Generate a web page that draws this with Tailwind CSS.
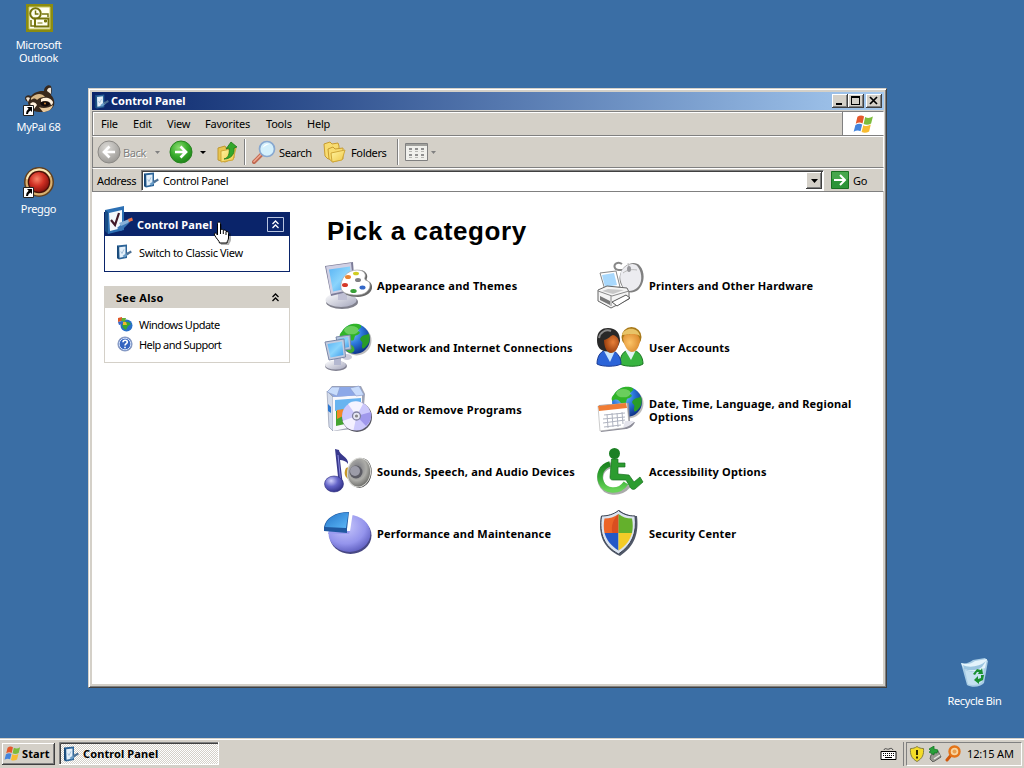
<!DOCTYPE html>
<html lang="en">
<head>
<meta charset="utf-8">
<title>Control Panel</title>
<script src="https://cdn.jsdelivr.net/npm/@tailwindcss/browser@4"></script>
</head>
<body class="relative h-[768px] w-[1024px] overflow-hidden bg-[#3a6ea5] font-['Noto_Sans',sans-serif] text-[11px] leading-[13px] tracking-[-0.35px] text-black">
<!-- shared gradients and symbols -->
<svg width="0" height="0" class="absolute">
  <defs>
    <radialGradient id="sea" cx=".35" cy=".3" r=".75"><stop offset="0" stop-color="#8fd0ff"/><stop offset=".5" stop-color="#2c78dc"/><stop offset="1" stop-color="#0c2f86"/></radialGradient>
    <linearGradient id="scr" x1="0" y1="0" x2="1" y2="1"><stop offset="0" stop-color="#5ab4f4"/><stop offset=".5" stop-color="#8ad4fc"/><stop offset="1" stop-color="#3c9cec"/></linearGradient>
    <linearGradient id="silver" x1="0" y1="0" x2="1" y2="1"><stop offset="0" stop-color="#fff"/><stop offset="1" stop-color="#a4a6bc"/></linearGradient>
    <radialGradient id="viol" cx=".4" cy=".3" r=".8"><stop offset="0" stop-color="#c8c8fc"/><stop offset=".6" stop-color="#9494ec"/><stop offset="1" stop-color="#5050b4"/></radialGradient>
    <linearGradient id="blue" x1="0" y1="0" x2="1" y2="1"><stop offset="0" stop-color="#2474c8"/><stop offset="1" stop-color="#5cb8f8"/></linearGradient>
    <radialGradient id="note" cx=".35" cy=".3" r=".8"><stop offset="0" stop-color="#d0d0fc"/><stop offset=".45" stop-color="#6464c8"/><stop offset="1" stop-color="#28287c"/></radialGradient>
    <radialGradient id="greenball" cx=".4" cy=".3" r=".8"><stop offset="0" stop-color="#8cdc70"/><stop offset=".5" stop-color="#38ac2c"/><stop offset="1" stop-color="#187814"/></radialGradient>
    <radialGradient id="grayball" cx=".4" cy=".3" r=".8"><stop offset="0" stop-color="#dcdad6"/><stop offset="1" stop-color="#94928e"/></radialGradient>
    <linearGradient id="folder" x1="0" y1="0" x2="1" y2="1"><stop offset="0" stop-color="#fff4a0"/><stop offset="1" stop-color="#f0c848"/></linearGradient>
    <linearGradient id="access" x1="0" y1="0" x2="0" y2="1"><stop offset="0" stop-color="#1c8420"/><stop offset=".5" stop-color="#34a834"/><stop offset="1" stop-color="#68d458"/></linearGradient>
    <radialGradient id="redball" cx=".4" cy=".35" r=".7"><stop offset="0" stop-color="#f88468"/><stop offset=".5" stop-color="#d03024"/><stop offset="1" stop-color="#80100c"/></radialGradient>
    <radialGradient id="faceD" cx=".6" cy=".4" r=".7"><stop offset="0" stop-color="#e88038"/><stop offset="1" stop-color="#8c3408"/></radialGradient>
    <radialGradient id="faceL" cx=".4" cy=".5" r=".7"><stop offset="0" stop-color="#fcc468"/><stop offset="1" stop-color="#d88428"/></radialGradient>
    <radialGradient id="cone" cx=".4" cy=".4" r=".65"><stop offset="0" stop-color="#74747c"/><stop offset=".6" stop-color="#acaca8"/><stop offset="1" stop-color="#686864"/></radialGradient>
    <symbol id="cp" viewBox="0 0 16 16">
      <path d="M1 1.500 11 .5v13.500L3 15.500 1 14z" fill="#2c6498"/><path d="M1 1.500 2.700 3v12.200L1 14z" fill="#184878"/>
      <path d="M3.200 3.300 9.500 2.400v10l-5.900 1.300z" fill="#e4f0fa"/><path d="M4.800 7.400 6 9.500l2-4.200" fill="none" stroke="#98b8d4" stroke-width=".8"/>
      <path d="m6.500 12 5-3.800 1.600 1.800-4.600 3.600z" fill="#689cc8"/><path d="m10 9.300 4.800-2.800 1 1.900-4.800 2.800z" fill="#4c7094"/>
    </symbol>
    <symbol id="globe" viewBox="0 0 32 32">
      <circle cx="17" cy="17" r="14.500" fill="#555" opacity=".4"/>
      <circle cx="15.500" cy="15.500" r="14.500" fill="url(#sea)"/>
      <path d="M3 8C7 1 16-1 21 2c2 3-2 3-3 6 4 0 2 4-2 4-2 2 0 5-4 5S9 13 5 13s-3 3-4 1 0-4 2-6z" fill="#30b428"/>
      <path d="M22 13c3-2 6-1 7-3 1 3 1 6 0 9-2 3-3 5-6 6-2-3 1-5-1-7s-2-3 0-5z" fill="#289c28"/>
      <path d="M10 21c3 0 5 2 5 5 0 2-2 3-4 3-3-1-5-3-6-5 1-2 3-3 5-3z" fill="#40ac30"/>
      <ellipse cx="12" cy="7" rx="7" ry="4" fill="#d8ffc0" opacity=".35"/>
    </symbol>
    <symbol id="flag" viewBox="0 0 19 17">
      <path d="M4 2.500c2-1.600 4-1.700 6-.4L8.600 8.400C6.700 7.200 4.700 7.400 2.500 8.800z" fill="#e4582c"/>
      <path d="M11 2.600c2 1.200 4.500 1.100 7-.5l-1.600 6.300c-2.200 1.500-4.600 1.600-6.800.5z" fill="#7cbc3c"/>
      <path d="M2.200 9.900C4.400 8.500 6.500 8.300 8.300 9.500L6.800 15.600C5 14.400 2.900 14.600.6 16z" fill="#4484dc"/>
      <path d="M9.300 10c2.200 1.200 4.400 1 6.800-.5l-1.500 6.200c-2.400 1.500-4.600 1.600-6.800.5z" fill="#f8bc30"/>
    </symbol>
    <symbol id="short" viewBox="0 0 11 11"><path d="M.5.5h10v10H.5z" fill="#fff" stroke="#222"/><path d="M4 2h5v5L7.500 5.500Q5 6.500 5 9H3q0-3.500 2.600-5.300z" fill="#000"/></symbol>
    <symbol id="chev" viewBox="0 0 9 9"><path d="m1.500 4 3-3 3 3M1.500 8l3-3 3 3" fill="none" stroke="currentColor" stroke-width="1.300"/></symbol>
    <pattern id="dither" width="2" height="2" patternUnits="userSpaceOnUse"><path d="M0 0h2v2H0z" fill="#fff"/><path d="M0 0h1v1H0zM1 1h1v1H1z" fill="#d4d0c8"/></pattern>
  </defs>
</svg>

<!-- desktop icons -->
<div class="absolute left-0 top-0 flex w-[77px] flex-col items-center text-center text-white">
  <svg class="mt-[3px] h-[32px] w-[32px]" viewBox="0 0 32 32"><path d="M3 1h27v28H3z" fill="#8c8c10"/><path d="M6 4h21v22H6z" fill="#fffff0" stroke="#c8c860"/><circle cx="12.500" cy="10.500" r="5.300" fill="#fffff0" stroke="#74740c" stroke-width="2"/><path d="M12.500 7.500v3.500h3" fill="none" stroke="#74740c" stroke-width="1.500"/><path d="M12 15.500h13.500v8H12z" fill="#fffff0" stroke="#74740c" stroke-width="2"/><path d="M14.500 20h5M21.500 17h2v2h-2z" stroke="#74740c" fill="#74740c"/><path d="M8 17v6h3M19 11h6v3" fill="none" stroke="#74740c" stroke-width="1.500"/></svg>
  <div class="mt-[3px]">Microsoft<br>Outlook</div>
</div>
<div class="absolute left-0 top-[84px] flex w-[77px] flex-col items-center text-center text-white">
  <div class="relative h-[32px] w-[32px]">
    <svg class="h-[32px] w-[32px]" viewBox="0 0 32 32"><path d="M2 14c0-2 3-4 6-2 5-5 9-5 13-5 0-4 4-7 7-5 1 3 1 6 0 9 4 4 4 10 2 12-3 5-10 5-14 5-6 0-11-5-11-10-2-1-3-2-3-4z" fill="#38281c"/><path d="M3 14c1-1 3-1 4 0l-2 4zM24 7c0-2 2-4 4-3v6z" fill="#f0e4d4"/><path d="M8 14c5-5 11-5 14-1-4 0-6 1-8 3-2-2-3-2-6 0z" fill="#d8b888"/><path d="M18 15c5-3 11 0 12 3 0 2-1 3-2 3-1-4-5-5-10-3zM7 20c2-3 6-2 7 1l-3 4z" fill="#fff0dc"/><path d="M16 23c4 2 10 1 14-2-1 5-6 7-10 7z" fill="#e8c89c"/><path d="M17 19c3-2 8-2 10 1-2 3-6 3-9 1z" fill="#100808"/><circle cx="22" cy="19.500" r="1" fill="#c88030"/></svg>
    <svg class="absolute bottom-0 left-0 h-[11px] w-[11px]"><use href="#short"/></svg>
  </div>
  <div class="mt-[4px]">MyPal 68</div>
</div>
<div class="absolute left-0 top-[166px] flex w-[77px] flex-col items-center text-center text-white">
  <div class="relative h-[32px] w-[32px]">
    <svg class="h-[32px] w-[32px]" viewBox="0 0 32 32"><circle cx="16" cy="16" r="15" fill="#604020"/><circle cx="16" cy="16" r="13.500" fill="#d8b070"/><path d="M4 13A12.500 12.500 0 0 1 27 10" fill="none" stroke="#f8e8b8" stroke-width="2"/><circle cx="16" cy="16" r="11.300" fill="#481008"/><circle cx="16" cy="16" r="10" fill="url(#redball)"/></svg>
    <svg class="absolute bottom-0 left-0 h-[11px] w-[11px]"><use href="#short"/></svg>
  </div>
  <div class="mt-[4px]">Preggo</div>
</div>
<div class="absolute left-[936px] top-[657px] flex w-[77px] flex-col items-center text-center text-white">
  <svg class="h-[32px] w-[32px]" viewBox="0 0 32 32"><path d="M2 6c4 1 8 0 12-3l12-2 3 3-4 22c-3 4-12 5-17 2z" fill="#a8cce4"/><path d="M2 6c6 2 10 1 14-2l12-2-2 9c-8 5-16 3-21 1z" fill="#e4f4fc"/><path d="M6 13c7 3 13 2 19-2l-2 14c-3 3-10 4-14 2z" fill="#c4e0f0"/><path d="M4 8c5 3 17 2 23-4l-4 6c-5 4-12 4-18 2z" fill="#7cb0d4" opacity=".7"/><path d="m14 17 4-5 4 1 1-2 1 6-5 0 1-2-2 0-2 3zM25 18l-1 5-4 2v2l-5-4 4-4 0 3 3-1 0-3z" fill="#189030"/></svg>
  <div class="mt-[5px] whitespace-nowrap">Recycle Bin</div>
</div>

<!-- explorer window -->
<main class="absolute left-[88px] top-[88px] flex h-[600px] w-[799px] flex-col border border-b-[#404040] border-l-[#d4d0c8] border-r-[#404040] border-t-[#d4d0c8] bg-[#d4d0c8] p-[2px] shadow-[inset_1px_1px_#fff,inset_-1px_-1px_#808080]">
  <header class="ml-px mt-px flex h-[18px] shrink-0 items-center bg-linear-to-r from-[#0a246a] to-[#a6caf0] pl-[2px] pr-[2px] font-bold tracking-[0.05px] text-white">
    <svg class="mr-[2px] h-[15px] w-[15px]"><use href="#cp"/></svg>
    <span class="-mt-[2px]">Control Panel</span>
    <div class="ml-auto flex">
      <button class="h-[14px] w-[16px] bg-[#d4d0c8] shadow-[inset_-1px_-1px_#404040,inset_1px_1px_#fff,inset_-2px_-2px_#808080]"><svg class="h-[14px] w-[16px]"><path d="M4 9h6v2H4z"/></svg></button>
      <button class="h-[14px] w-[16px] bg-[#d4d0c8] shadow-[inset_-1px_-1px_#404040,inset_1px_1px_#fff,inset_-2px_-2px_#808080]"><svg class="h-[14px] w-[16px]"><path d="M3 2h9v9H3zM4 4v6h7V4z" fill-rule="evenodd"/></svg></button>
      <button class="ml-[2px] h-[14px] w-[16px] bg-[#d4d0c8] shadow-[inset_-1px_-1px_#404040,inset_1px_1px_#fff,inset_-2px_-2px_#808080]"><svg class="h-[14px] w-[16px]"><path d="m4 3 7 7M11 3l-7 7" stroke="#000" stroke-width="1.700"/></svg></button>
    </div>
  </header>
  <nav class="ml-px mt-px flex h-[25px] shrink-0 items-center border border-b-[#808080] border-l-[#808080] border-r-white border-t-[#808080] pl-[8px] tracking-[-0.2px] shadow-[inset_1px_1px_#fff]">
    <span class="w-[32px]">File</span><span class="w-[34px]">Edit</span><span class="w-[38px]">View</span><span class="w-[61px]">Favorites</span><span class="w-[41px]">Tools</span><span>Help</span>
    <div class="ml-auto flex h-full w-[41px] items-center justify-center border-l border-[#808080] bg-white"><svg class="h-[19px] w-[21px]"><use href="#flag"/></svg></div>
  </nav>
  <section class="ml-px flex h-[32px] shrink-0 items-center border border-b-[#808080] border-l-[#808080] border-r-white border-t-white pl-[4px]">
    <svg class="h-[24px] w-[24px]" viewBox="0 0 24 24"><circle cx="12" cy="12" r="11" fill="url(#grayball)" stroke="#8c8a86"/><path d="M18 12H7m5.500-5.500L7 12l5.500 5.500" fill="none" stroke="#fff" stroke-width="2.700"/></svg>
    <span class="ml-[2px] w-[31px] text-[#808080] [text-shadow:1px_1px_#fff]">Back</span>
    <svg class="h-[5px] w-[7px]"><path d="M1 1h5L3.500 4z" fill="#808080"/></svg>
    <svg class="ml-[8px] h-[24px] w-[24px]" viewBox="0 0 24 24"><circle cx="12" cy="12" r="11" fill="url(#greenball)" stroke="#288420"/><path d="M6 12h11m-5.500-5.500L17 12l-5.500 5.500" fill="none" stroke="#fff" stroke-width="2.700"/></svg>
    <svg class="ml-[7px] h-[5px] w-[7px]"><path d="M0 1h6L3 4z"/></svg>
    <svg class="ml-[10px] h-[24px] w-[22px]" viewBox="0 0 22 24"><path d="M1 8l7-2 1 2 8-2v12L8 22 1 20z" fill="#e8c450" stroke="#c09830"/><path d="m4 11 15-3-3 12-12 2z" fill="url(#folder)" stroke="#d0a838"/><path d="M7 19c4-1 6-5 5-11l-3 1 5-7 6 5-3 1c1 6-3 11-10 11z" fill="#34a82c" stroke="#207818" stroke-width=".8"/></svg>
    <div class="ml-[5px] mr-[6px] h-[26px] w-[2px] border-l border-r border-l-[#808080] border-r-white"></div>
    <svg class="h-[25px] w-[24px]" viewBox="0 0 24 25"><path d="M2 22 10 14" stroke="#c06850" stroke-width="4" stroke-linecap="round"/><path d="M2 21.500 9 14.500" stroke="#f0a890" stroke-width="1.500" stroke-linecap="round"/><circle cx="15" cy="9" r="7.500" fill="#d4f0fc" stroke="#88a8d0" stroke-width="1.700"/><path d="M10.500 8c1-4 5-5 7-4-3 1-5 2-7 4z" fill="#fff"/></svg>
    <span class="ml-[3px] w-[44px]">Search</span>
    <svg class="h-[22px] w-[24px]" viewBox="0 0 24 22"><path d="M1 3l6-2 2 2 6-1 1 3v10L5 18 2 15z" fill="#f8dc70" stroke="#c89c30"/><path d="M5 8l5-2 2 2 8-1v11l-10 3-4-3z" fill="#f8dc70" stroke="#c89c30"/><path d="m8 12 14-3-3 10-10 2z" fill="url(#folder)" stroke="#d0a838"/></svg>
    <span class="ml-[4px] w-[35px]">Folders</span>
    <div class="ml-[11px] mr-[6px] h-[26px] w-[2px] border-l border-r border-l-[#808080] border-r-white"></div>
    <svg class="h-[20px] w-[24px]" viewBox="0 0 24 20"><path d="M.5 1.500h22v17H.5z" fill="#f0f0ec" stroke="#808080"/><path d="M1 2h21v2H1z" fill="#a0a09c"/><path d="M4 6h3v2H4zM10 6h3v2h-3zM16 6h3v2h-3zM4 12h3v2H4zM10 12h3v2h-3zM16 12h3v2h-3z" fill="#909090"/><path d="M4 9.500h3m3 0h3m3 0h3M4 15.500h3m3 0h3m3 0h3" stroke="#b8b8b4"/></svg>
    <svg class="ml-[2px] h-[5px] w-[7px]"><path d="M0 1h5L2.500 4z" fill="#808080"/></svg>
  </section>
  <section class="ml-px flex h-[24px] shrink-0 items-center border border-b-[#808080] border-l-[#808080] border-r-white border-t-white pl-[4px]">
    <span class="w-[44px]">Address</span>
    <div class="flex h-[21px] w-[683px] items-center border border-b-white border-l-[#808080] border-r-white border-t-[#808080] bg-white pl-[1px] shadow-[inset_1px_1px_#404040]">
      <svg class="mr-[4px] h-[16px] w-[16px]"><use href="#cp"/></svg><span>Control Panel</span>
      <button class="ml-auto mr-px mt-px flex h-[17px] w-[16px] items-center justify-center bg-[#d4d0c8] shadow-[inset_-1px_-1px_#404040,inset_1px_1px_#fff,inset_-2px_-2px_#808080]"><svg class="h-[4px] w-[7px]"><path d="M0 0h7L3.500 4z"/></svg></button>
    </div>
    <svg class="ml-[7px] h-[18px] w-[18px]" viewBox="0 0 18 18"><path d="M.5.5h17v17H.5z" fill="#2c9438" stroke="#187020"/><path d="M1 1h16v7H1z" fill="#60b860" opacity=".5"/><path d="M3 9h11M9 4l5 5-5 5" fill="none" stroke="#fff" stroke-width="2"/></svg>
    <span class="ml-[4px]">Go</span>
  </section>
  <div class="ml-px flex min-h-0 flex-1 border-b border-r border-[#d4d0c8] bg-white">
    <aside class="ml-[12px] mt-[20px] w-[186px] shrink-0">
      <section class="h-[60px] border border-[#0a246a] bg-white">
        <h2 class="relative flex h-[23px] items-center bg-[#0a246a] pl-[32px] pr-[5px] font-bold tracking-[0.1px] text-white">
          <svg class="absolute -left-px -top-[8px] h-[32px] w-[32px]" viewBox="0 0 32 32"><path d="M1 5 20 1v24L4 29z" fill="#2c70b4"/><path d="m1 5 3 2v22l-3-3z" fill="#184c84"/><path d="M5 8l13-3v18L6 26z" fill="#f4f8fc"/><path d="m7 15 4 5 4-12" fill="none" stroke="#401828" stroke-width="2.200"/><path d="m13 23 8-7 4 2-8 8z" fill="#3c78b8"/><path d="m15 18 10-4 1 3-9 4z" fill="#88b0d8"/><path d="m24 14 4-1.500 1 3-4 1.500z" fill="#e87048"/></svg>
          <span class="-mt-px">Control Panel</span>
          <svg class="ml-auto h-[16px] w-[17px] text-white" viewBox="0 0 17 16"><path d="M.5.5h16v14H.5z" fill="none" stroke="#b8c4e0"/><path d="m5.500 7 3-3 3 3m-6 4 3-3 3 3" fill="none" stroke="#fff" stroke-width="1.300"/></svg>
        </h2>
        <div class="mt-[8px] flex items-center pl-[11px]"><svg class="mr-[7px] h-[16px] w-[16px]"><use href="#cp"/></svg>Switch to Classic View</div>
      </section>
      <section class="mt-[14px] h-[77px] border border-[#d4d0c8] bg-white">
        <h2 class="flex h-[21px] items-center bg-[#d4d0c8] pl-[11px] pr-[9px] font-bold tracking-[0.3px]">See Also<svg class="ml-auto h-[9px] w-[9px]"><use href="#chev"/></svg></h2>
        <div class="mt-[8px] flex items-center pl-[12px] tracking-[-0.5px]"><svg class="mr-[6px] h-[16px] w-[16px]" viewBox="0 0 16 16"><circle cx="9.500" cy="9.500" r="6" fill="#2870c8"/><path d="M5 8c3-3 6-3 9 0l-3 2-2 4-3-2z" fill="#38a830"/><path d="M1 2l4-1 0 4-4 1z" fill="#e05828"/><path d="m5 2 4 0-1 4-4-1z" fill="#60b038"/><path d="m1 6 4-1 1 3-4 1z" fill="#3868c8"/><path d="m6 6 3 0 1 3-4 0z" fill="#f0b830"/></svg>Windows Update</div>
        <div class="mt-[4px] flex items-center pl-[12px] tracking-[-0.55px]"><svg class="mr-[6px] h-[16px] w-[16px]" viewBox="0 0 16 16"><circle cx="8" cy="8" r="7" fill="#3464c0" stroke="#8c9cc0" stroke-width="1.200"/><circle cx="8" cy="8" r="5.800" fill="none" stroke="#d4e0f8"/><path d="M6 6.300c0-3 4.300-2.500 4.300-.3C10.300 7.700 8 7.500 8 9.500M8 10.700v1.600" fill="none" stroke="#fff" stroke-width="1.600"/></svg>Help and Support</div>
      </section>
    </aside>
    <section class="ml-[34px]">
      <h1 class="ml-[3px] mt-[22px] h-[40px] whitespace-nowrap font-['Liberation_Sans',sans-serif] text-[26px] font-bold leading-[34px] tracking-[0.6px]">Pick a category</h1>
      <div class="grid grid-cols-[272px_272px] grid-rows-[repeat(5,62px)] font-bold tracking-[0.18px]">
        <a class="flex items-center gap-[5px]"><svg class="h-[48px] w-[48px] shrink-0" viewBox="0 0 48 48"><ellipse cx="18" cy="41" rx="16" ry="7" fill="#80808c"/><ellipse cx="17" cy="39" rx="15.500" ry="7" fill="url(#silver)"/><path d="M14 30h9v9h-9z" fill="#c0c0d4"/><path d="m1 5 28-4 2 28-24 6z" fill="#7c7c98"/><path d="m2 5.500 25-3.500 3 26-23 5z" fill="#d0d0e4"/><path d="m5 8.500 21-3 2 21-19 4z" fill="url(#scr)"/><path d="M18 28c-1-9 6-19 17-19 7 0 9 5 8 8-2 4 4 2 5 8s-6 11-14 11c-9 0-15-3-16-8z" fill="#686868"/><path d="M17 27c-1-9 6-18 16-18 8 0 9 5 8 7-2 5 5 2 5 8s-6 10-13 10c-9 0-15-2-16-7z" fill="#fff" stroke="#aaa" stroke-width=".7"/><ellipse cx="24" cy="16" rx="3" ry="2" fill="#e88430"/><ellipse cx="32" cy="12.500" rx="3" ry="1.800" fill="#d0cc20"/><ellipse cx="21" cy="24" rx="3" ry="2" fill="#d43828"/><ellipse cx="29.500" cy="30" rx="3.200" ry="2" fill="#38a038"/><ellipse cx="38.500" cy="26.500" rx="3" ry="2" fill="#3468c8"/><ellipse cx="34" cy="19" rx="3" ry="2" fill="#808084"/></svg><span class="tracking-[0.28px]">Appearance and Themes</span></a>
        <a class="flex items-center gap-[5px]"><svg class="h-[48px] w-[48px] shrink-0" viewBox="0 0 48 48"><path d="M26 3c-4-3-9 0-7 4s10 1 13 2" fill="none" stroke="#888" stroke-width="2"/><path d="M25 11C28 3 39-1 44 5c6 7 4 19-2 24-5 4-12 3-15-2s-5-9-2-16z" fill="#808080"/><path d="M25 11C28 4 38 0 42 6c5 7 4 17-1 21s-12 4-14-1-4-9-2-15z" fill="#ececf0"/><path d="M27 12c4-3 8-4 14-3M32 2l2 8" fill="none" stroke="#bbb"/><ellipse cx="33" cy="8" rx="2" ry="3" fill="#98989c"/><path d="m4 12 16-2 4 16-15 3z" fill="#fff" stroke="#888"/><path d="m6 14 12-2 3 12-12 2z" fill="#a8d8fc"/><path d="m2 29 9-4 20 2 2 4v7l-18 9L2 40z" fill="#f4f4f4" stroke="#666"/><path d="m2 30 14 5 17-5M15 35v10" fill="none" stroke="#888"/><path d="m4 35 10 5v4L4 39z" fill="#787878"/><path d="m16 41 14-7 4 3-13 8z" fill="#fff" stroke="#555"/><path d="m12 28 16 1-11 4-11-3z" fill="#c8c8c8"/></svg>Printers and Other Hardware</a>
        <a class="flex items-center gap-[5px]"><svg class="h-[48px] w-[48px] shrink-0" viewBox="0 0 48 48"><use href="#globe" x="15" y="0" width="33" height="33"/><path d="m12 14 14-2 1 14-12 2z" fill="#b8c4dc" stroke="#7888a8"/><path d="m14 16 10-2 1 10-10 2z" fill="url(#scr)"/><ellipse cx="23" cy="34" rx="5" ry="3" fill="#ccccdc"/><ellipse cx="12" cy="43" rx="11" ry="5" fill="#808090"/><ellipse cx="11.500" cy="42" rx="10.500" ry="4.500" fill="url(#silver)"/><path d="M10 34h7v8h-7z" fill="#b4b8d0"/><path d="m1 19 19-3 1.500 18L5 37z" fill="#c4ccdf" stroke="#7c88a8"/><path d="m3.500 21 14.500-2.500L19.500 32 6.500 34.500z" fill="url(#scr)"/></svg><span class="tracking-[0.12px]">Network and Internet Connections</span></a>
        <a class="flex items-center gap-[5px]"><svg class="h-[48px] w-[48px] shrink-0" viewBox="0 0 48 48"><path d="M24 41c0-8 3-14 11-14s12 7 12 14c-4 3-18 3-23 0z" fill="#38b440" stroke="#187420"/><path d="m29 27 6 10 5-10z" fill="#e0f4f4"/><circle cx="35.500" cy="14" r="10" fill="#a87818"/><path d="M27 15c2-6 5-2 10-5 4 0 7 4 7 8-1 8-5 11-8 11s-8-4-9-14z" fill="url(#faceL)"/><path d="M26 12c2-8 16-9 18 1-5-3-9-2-18-1z" fill="#e8c468"/><path d="M1 41c0-8 4-14 11-14 9 0 13 7 13 14-5 3-19 3-24 0z" fill="#2c64d8" stroke="#1c3c94"/><path d="m8 28 6 11 5-11z" fill="#c8e4fc"/><path d="M1 17C1 8 6 5 12 5c8 0 12 5 12 13-2 7-5 10-8 10C5 30 1 25 1 17z" fill="#282828"/><path d="M8 17c5-1 7-5 9-5s6 3 6 7c-1 7-4 11-8 11s-7-6-7-13z" fill="url(#faceD)"/><path d="M3 15C4 9 10 6 15 8" fill="none" stroke="#888" stroke-width="2"/></svg>User Accounts</a>
        <a class="flex items-center gap-[5px]"><svg class="h-[48px] w-[48px] shrink-0" viewBox="0 0 48 48"><path d="m4 6 4-5 29 0 4 8-3 34-28 3-5-4z" fill="#a0a4b4"/><path d="m3 6 6 6v34l-4-4z" fill="#d4dcec" stroke="#8890a8" stroke-width=".6"/><path d="m9 12 29-2v30L9 46z" fill="#f8f8fc"/><path d="m10 2 26 0 3 8-29 2-6-6z" fill="#8ca8e8"/><path d="m8 2 8 0-3 9-10-4zM35 1l5 9-8 1-6-8z" fill="#c8dcfc" stroke="#8898c8" stroke-width=".6"/><path d="m11 15 26-2v10l-26 3z" fill="#68b4f0"/><path d="m12 26 9-2v15l-9 2z" fill="#44a430"/><path d="m13 25 8-1v6l-8 4z" fill="#f48828"/><path d="m4 19 3 3v6l-3-2z" fill="#2c78d0"/><circle cx="33" cy="32" r="15" fill="#585864"/><circle cx="32.500" cy="31" r="14.500" fill="#ccc8fc"/><path d="M32.500 31 24 19c5-4 12-3 15 0z" fill="#fff" opacity=".8"/><path d="M32.500 31 47 27c1 6-1 10-5 14z" fill="#a098ec"/><path d="m32.500 31-14 5c2 5 6 9 11 9z" fill="#f4f0ff"/><circle cx="32.500" cy="31" r="4" fill="#e8e8f4" stroke="#8080a0" stroke-width="1.300"/><circle cx="32.500" cy="31" r="1.600" fill="#888"/></svg><span class="tracking-[0.28px]">Add or Remove Programs</span></a>
        <a class="flex items-center gap-[5px]"><svg class="h-[48px] w-[48px] shrink-0" viewBox="0 0 48 48"><use href="#globe" x="15" y="1" width="33" height="33"/><path d="m3 20 30-2 1 22c2-1 3-3 5-3-2 5-7 7-9 7L5 47z" fill="#8c8c98"/><path d="m2 21 29-3 2 21-6 4-23 3z" fill="#fff" stroke="#aaa" stroke-width=".6"/><path d="m2 21 28-3 1 5-28 3z" fill="#f07c34"/><path d="M8 30l21-2M7 34l22-2M7 38l22-3M8 42l17-2M11 29l1 14M16 28l1 14M21 28l1 14M26 27l1 12" stroke="#b0b4c0" fill="none"/><path d="m27 43 2-7 9 0c-3 4-6 6-11 7z" fill="#e4e4ec"/></svg><span class="mt-[2px]">Date, Time, Language, and Regional Options</span></a>
        <a class="flex items-center gap-[5px]"><svg class="h-[48px] w-[48px] shrink-0" viewBox="0 0 48 48"><path d="M28 16l8 2v12l-8 2z" fill="#e8b030"/><path d="M22 21c-2 4-2 8 2 11l6 2V18z" fill="#c89828"/><path d="m11 2 4 1c0 5 10 7 9 14-2-3-5-4-8-4l3 26h-4z" fill="#38388c"/><path d="m14 8 3 30" stroke="#8c8ce0"/><ellipse cx="10" cy="37" rx="9.500" ry="8" fill="url(#note)" stroke="#303080" stroke-width=".6"/><ellipse cx="36.500" cy="26" rx="11" ry="15" fill="#444" transform="rotate(10 36.500 26)"/><ellipse cx="35" cy="25.500" rx="11.500" ry="14.500" fill="url(#cone)" stroke="#d8d8d4" transform="rotate(10 35 25.500)"/><circle cx="32" cy="25" r="6.500" fill="#5c5c64"/><circle cx="31" cy="24" r="5" fill="#9c9ca8"/></svg><span class="tracking-[0.22px]">Sounds, Speech, and Audio Devices</span></a>
        <a class="flex items-center gap-[5px]"><svg class="h-[48px] w-[48px] shrink-0" viewBox="0 0 48 48"><g fill="none" stroke="#555" opacity=".5" transform="translate(1.200 1.200)"><path d="M15 17C5 18 1 27 4 35c4 10 18 12 27 2" stroke-width="6"/></g><circle cx="18.500" cy="6.500" r="5.500" fill="#1c8024"/><path d="M15.500 12h6.500l0 4h7v4h-7v7l11 1 5 7 6-5 3 5-8 7c-2 1-4 0-5-2l-4-7-13 0c-2 0-3-1-3-3z" fill="#2c9c30" stroke="#187020" stroke-width=".7"/><path d="M14 17C6 19 2 27 5 35c4 10 18 11 25 1" fill="none" stroke="url(#access)" stroke-width="5.500"/></svg>Accessibility Options</a>
        <a class="flex items-center gap-[5px]"><svg class="h-[48px] w-[48px] shrink-0" viewBox="0 0 48 48"><ellipse cx="26.500" cy="26.500" rx="21" ry="18.500" fill="#484884"/><ellipse cx="25.500" cy="24.500" rx="21" ry="18.500" fill="url(#viol)"/><path d="M0 3h29l-3 19H0z" fill="#fff"/><path d="M5 22h21l-1 3H4z" fill="#9c9cf0"/><path d="M0 18C2 9 11 3 25 3l-2 17v4L0 22z" fill="#2058a0"/><path d="M1 18C2 9 12 3.500 24.500 3.500L22 19z" fill="url(#blue)"/></svg>Performance and Maintenance</a>
        <a class="flex items-center gap-[5px]"><svg class="h-[48px] w-[48px] shrink-0" viewBox="0 0 48 48"><path d="M23 1c5 4 11 6 18 6 2 17-2 30-17 40C7 39 2 26 5 7c7 0 13-2 18-6z" fill="#505868"/><path d="M22.500 1.500c5 4 10 5.500 16.500 5.500 2 17-3 29-16.500 38C8 37 3 25 5.500 7c6 0 12-1.500 17-5.500z" fill="#dce4f0" stroke="#3c4454"/><path d="M22.500 5v19H8.500C7.500 19 7.500 14 8.500 9.500c5 0 10-1.500 14-4.500z" fill="#ec6428"/><path d="M22.500 5c4 3 8 4.500 13.500 4.500 1 5 1 10 0 14.500H22.500z" fill="#64b02c"/><path d="M8.500 24h14v17.500C15 37 10.500 31 8.500 24z" fill="#2458c8"/><path d="M22.500 24H36c-2 7-6 13-13.500 17.500z" fill="#f4cc28"/><path d="M22.500 5v19h-6c-2-7 1-14 6-19z" fill="#c83818" opacity=".5"/></svg>Security Center</a>
      </div>
    </section>
  </div>
</main>

<!-- mouse pointer -->
<svg class="absolute left-[213px] top-[221px] h-[24px] w-[18px]" viewBox="0 0 18 24"><path d="M4.500 14.500V3c0-2 3-2 3 0v6c2-1.500 3-.5 3 .5 2-1 3 0 3 1 2-.5 3 .5 3 2v5c0 2-2 3-2 5h-8c0-2-3-4-5-8-1-2 1-3 3 0z" transform="translate(1.500 1.500)" fill="#000" opacity=".3"/><path d="M4.500 14V2.500c0-2 3-2 3 0V9c1.500-1.200 2.700-.5 2.700.5 1.800-1 2.800 0 2.800 1 1.500-.5 2.500.5 2.500 2V17c0 2-1.500 3-1.500 5H6.500c0-2-3-4-5-8-.8-2 1-3 3 0z" fill="#fff" stroke="#000"/><path d="M7.500 9v4M10.300 10v3M13 11v3" stroke="#000"/></svg>

<!-- taskbar -->
<footer class="absolute bottom-0 left-0 flex h-[30px] w-full items-center border-t border-[#d4d0c8] bg-[#d4d0c8] pl-[2px] pr-[2px] shadow-[inset_0_1px_#fff]">
  <button class="flex h-[22px] w-[53px] items-center bg-[#d4d0c8] pb-px pl-[2px] font-bold tracking-[0.1px] shadow-[inset_-1px_-1px_#404040,inset_1px_1px_#fff,inset_-2px_-2px_#808080]"><svg class="mr-px h-[16px] w-[17px]"><use href="#flag"/></svg>Start</button>
  <button class="relative ml-[4px] flex h-[23px] w-[160px] items-center pl-[4px] font-bold tracking-[0.1px]"><svg class="absolute inset-0 h-full w-full"><path d="M0 0h160v23H0z" fill="url(#dither)"/><path d="M.5 23V.5H160" fill="none" stroke="#808080"/><path d="M1.500 22V1.500H159" fill="none" stroke="#404040"/><path d="M159.500 0v22.500H0" fill="none" stroke="#fff"/></svg><svg class="relative mr-[4px] h-[16px] w-[16px]"><use href="#cp"/></svg><span class="relative">Control Panel</span></button>
  <svg class="ml-auto mr-[6px] h-[14px] w-[17px]" viewBox="0 0 17 14"><path d="M4 3c1-3 3 0 5-1s3-1 4 1" fill="none" stroke="#444"/><path d="M1 4.500h15v8H1z" fill="#fff" stroke="#000"/><path d="M3 6.500h11M3 8.500h11" stroke="#000" stroke-dasharray="1 1"/><path d="M5 10.500h7" stroke="#000"/></svg>
  <div class="mr-[2px] h-[24px] border-l border-[#808080]"></div>
  <div class="flex h-[24px] w-[116px] items-center border border-b-white border-l-[#808080] border-r-white border-t-[#808080] pl-[2px]">
    <svg class="h-[16px] w-[16px]" viewBox="0 0 16 16"><path d="M8 .5c2 1.500 4 2 6.500 2 .5 6-1 10-6.500 13C2.500 12.500 1 8.500 1.500 2.500 4 2.500 6 2 8 .5z" fill="#f4dc28" stroke="#847c40"/><path d="M8 4v5M8 10.500v2" stroke="#302800" stroke-width="2"/></svg>
    <svg class="ml-[2px] h-[16px] w-[16px]" viewBox="0 0 16 16"><path d="m4 9 7-4 3 6-8 5-3-3z" fill="#989890" stroke="#60605c"/><path d="m7 13 6-4" stroke="#e8e8e0" stroke-width="1.500"/><path d="M2 3l5-3 0 3 4 1-1 3-3 0 0 2-5-3 2-1z" fill="#28a038" stroke="#107020" stroke-width=".7"/></svg>
    <svg class="ml-[2px] h-[17px] w-[16px]" viewBox="0 0 16 17"><path d="m2 15 5-6" stroke="#d0580c" stroke-width="3" stroke-linecap="round"/><circle cx="9.500" cy="6.500" r="5" fill="#f8d4a0" stroke="#e47418" stroke-width="2.400"/><circle cx="9.500" cy="6.500" r="2" fill="#e8a050"/></svg>
    <span class="ml-[6px] whitespace-nowrap tracking-[-0.15px]">12:15 AM</span>
  </div>
</footer>
</body>
</html>
